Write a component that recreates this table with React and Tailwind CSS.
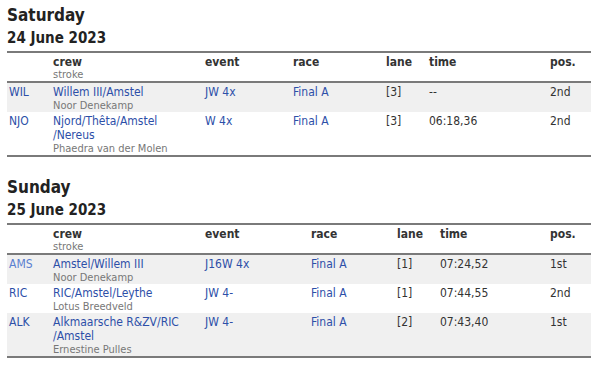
const DAYS = [
  {
    day: 'Saturday',
    date: '24 June 2023',
    widths: [44, 152, 88, 93, 43, 121, 43],
    rows: [
      { code: 'WIL', crew: ['Willem III/Amstel'], stroke: 'Noor Denekamp', event: 'JW 4x', race: 'Final A', lane: '[3]', time: '--', pos: '2nd' },
      { code: 'NJO', crew: ['Njord/Thêta/Amstel', '/Nereus'], stroke: 'Phaedra van der Molen', event: 'W 4x', race: 'Final A', lane: '[3]', time: '06:18,36', pos: '2nd' },
    ],
  },
  {
    day: 'Sunday',
    date: '25 June 2023',
    widths: [44, 152, 106, 86, 43, 110, 43],
    rows: [
      { code: 'AMS', visited: true, crew: ['Amstel/Willem III'], stroke: 'Noor Denekamp', event: 'J16W 4x', race: 'Final A', lane: '[1]', time: '07:24,52', pos: '1st' },
      { code: 'RIC', crew: ['RIC/Amstel/Leythe'], stroke: 'Lotus Breedveld', event: 'JW 4-', race: 'Final A', lane: '[1]', time: '07:44,55', pos: '2nd' },
      { code: 'ALK', crew: ['Alkmaarsche R&ZV/RIC', '/Amstel'], stroke: 'Ernestine Pulles', event: 'JW 4-', race: 'Final A', lane: '[2]', time: '07:43,40', pos: '1st' },
    ],
  },
];

const LINK = 'text-[#2d4fa8]';

function DayTable({ data }) {
  return (
    <section>
      <h2 className="text-[17px] font-bold leading-[22px] text-[#222]">{data.day}</h2>
      <h3 className="text-[15px] font-bold leading-[18px] text-[#222] mt-[3px] mb-[4px]">{data.date}</h3>
      <table className="table-fixed border-collapse text-[12px] leading-[14px] w-[584px]">
        <colgroup>
          {data.widths.map(function(w, i) { return <col key={i} style={{ width: w }} />; })}
        </colgroup>
        <thead className="border-t-2 border-b-2 border-[#7a7a7a]">
          <tr className="text-left align-top text-[#333]">
            <th className="px-[2px] pt-[2px]"></th>
            <th className="px-[2px] pt-[2px]">
              <div className="font-bold">crew</div>
              <div className="font-normal text-[11px] leading-[12px] text-[#777]">stroke</div>
            </th>
            <th className="px-[2px] pt-[2px] font-bold">event</th>
            <th className="px-[2px] pt-[2px] font-bold">race</th>
            <th className="px-[2px] pt-[2px] font-bold">lane</th>
            <th className="px-[2px] pt-[2px] font-bold">time</th>
            <th className="px-[2px] pt-[2px] font-bold">pos.</th>
          </tr>
        </thead>
        <tbody className="border-b-2 border-[#7a7a7a]">
          {data.rows.map(function(r, i) {
            return (
              <tr key={r.code} className={'align-top ' + (i % 2 === 0 ? 'bg-[#f0f0f0]' : 'bg-white')}>
                <td className={'px-[2px] pt-[2px] ' + (r.visited ? 'text-[#5a7fd0]' : LINK)}>{r.code}</td>
                <td className="px-[2px] pt-[2px]">
                  {r.crew.map(function(c) { return <div key={c} className={LINK}>{c}</div>; })}
                  <div className="text-[11px] leading-[13px] text-[#777]">{r.stroke}</div>
                </td>
                <td className={'px-[2px] pt-[2px] ' + LINK}>{r.event}</td>
                <td className={'px-[2px] pt-[2px] ' + LINK}>{r.race}</td>
                <td className="px-[2px] pt-[2px] text-[#333]">{r.lane}</td>
                <td className="px-[2px] pt-[2px] text-[#333]">{r.time}</td>
                <td className="px-[2px] pt-[2px] text-[#333]">{r.pos}</td>
              </tr>
            );
          })}
        </tbody>
      </table>
    </section>
  );
}

export default function App() {
  return (
    <div className="w-[605px] h-[370px] bg-white px-[7px] pt-[4px] overflow-hidden" style={{ fontFamily: '"DejaVu Sans Condensed", "DejaVu Sans", sans-serif' }}>
      <div className="flex flex-col gap-[19px]">
        {DAYS.map(function(d) { return <DayTable key={d.day} data={d} />; })}
      </div>
    </div>
  );
}
